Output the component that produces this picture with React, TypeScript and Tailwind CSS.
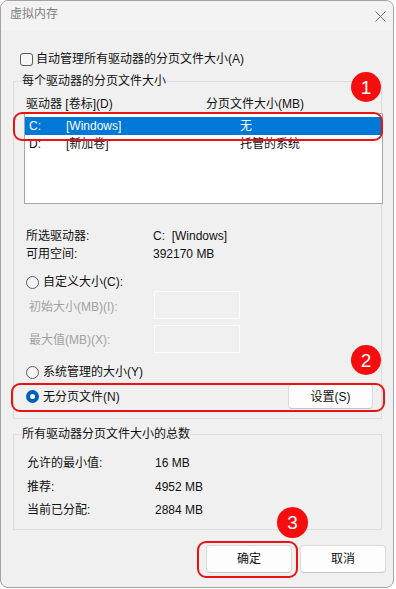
import type { ReactNode } from "react"

function Radio({ checked = false }: { checked?: boolean }) {
  if (checked) {
    return (
      <span className="w-[13px] h-[13px] rounded-full bg-[#005fb8] flex items-center justify-center shrink-0">
        <span className="w-[5px] h-[5px] rounded-full bg-white" />
      </span>
    )
  }
  return <span className="w-[13px] h-[13px] rounded-full border border-[#5b5b5b] bg-[#f6f6f6] shrink-0" />
}

function Button({ children, className }: { children: ReactNode; className: string }) {
  return (
    <div
      className={`flex items-center justify-center bg-[#fdfdfd] border border-[#dadada] border-b-[#c6c6c6] rounded-[4px] ${className}`}
    >
      {children}
    </div>
  )
}

export default function App() {
  return (
    <div className="w-[396px] h-[589px] bg-white font-['Liberation_Sans','Noto_Sans_CJK_SC',sans-serif] text-[12px] leading-[16px] text-[#111]">
      <div className="relative w-[394px] h-[588px] border border-[#a3a3a3] rounded-[8px] bg-[#f0f0f0] overflow-hidden flex flex-col">
        {/* title bar */}
        <div className="h-[30px] shrink-0 bg-[#f3f3f3] flex items-start justify-between pt-[5px] pl-[9px] pr-[7px]">
          <span className="text-[#808080]">虚拟内存</span>
          <svg className="mt-[5px]" width="11" height="11" viewBox="0 0 11 11">
            <path d="M0.5 0.5 L10.5 10.5 M10.5 0.5 L0.5 10.5" stroke="#6e6e6e" strokeWidth="1" fill="none" />
          </svg>
        </div>

        <div className="flex flex-col pl-[12px] pr-[11px]">
          <div className="mt-[20px] ml-[7px] flex items-center gap-[3px]">
            <span className="w-[13px] h-[13px] rounded-[3px] border border-[#5b5b5b] bg-[#f7f7f7]" />
            <span>自动管理所有驱动器的分页文件大小(A)</span>
          </div>

          {/* per-drive group */}
          <fieldset className="mt-[6px] border border-[#dcdcdc] pl-[8px] pr-0 pb-[9px] min-w-0">
            <legend>每个驱动器的分页文件大小</legend>
            <div className="mt-[7px] ml-[4px] flex">
              <span className="w-[180px]">驱动器 [卷标](D)</span>
              <span>分页文件大小(MB)</span>
            </div>
            <div className="mt-[1px] ml-[2px] -mr-[2px] h-[91px] border border-[#a6a6a6] bg-white pt-[3px]">
              <div className="h-[18px] flex items-center pl-[4px] bg-[#0078d7] text-white">
                <span className="w-[37px]">C:</span>
                <span className="w-[174px]">[Windows]</span>
                <span>无</span>
              </div>
              <div className="h-[18px] flex items-center pl-[4px]">
                <span className="w-[37px]">D:</span>
                <span className="w-[174px]">[新加卷]</span>
                <span>托管的系统</span>
              </div>
            </div>

            <div className="mt-[24px] ml-[4px] flex flex-col gap-[2px]">
              <div className="flex">
                <span className="w-[127px]">所选驱动器:</span>
                <span className="whitespace-pre">C:  [Windows]</span>
              </div>
              <div className="flex">
                <span className="w-[127px]">可用空间:</span>
                <span>392170 MB</span>
              </div>
            </div>

            <div className="mt-[12px] ml-[4px] flex items-center gap-[4px]">
              <Radio />
              <span>自定义大小(C):</span>
            </div>
            <div className="mt-[1px] ml-[7px] flex items-start text-[#a2a2a2]">
              <span className="w-[125px] mt-[8px]">初始大小(MB)(I):</span>
              <div className="w-[86px] h-[28px] border border-[#fcfcfc]" />
            </div>
            <div className="mt-[6px] ml-[7px] flex items-start text-[#a2a2a2]">
              <span className="w-[125px] mt-[7px]">最大值(MB)(X):</span>
              <div className="w-[86px] h-[28px] border border-[#fcfcfc]" />
            </div>

            <div className="mt-[11px] ml-[4px] flex items-center gap-[4px]">
              <Radio />
              <span>系统管理的大小(Y)</span>
            </div>
            <div className="mt-[4px] ml-[4px] mr-[8px] flex items-center justify-between">
              <div className="flex items-center gap-[4px]">
                <Radio checked />
                <span>无分页文件(N)</span>
              </div>
              <Button className="w-[85px] h-[25px]">设置(S)</Button>
            </div>
          </fieldset>

          {/* totals group */}
          <fieldset className="mt-[7px] border border-[#dcdcdc] pl-[8px] pr-0 pb-[11px] min-w-0">
            <legend>所有驱动器分页文件大小的总数</legend>
            <div className="mt-[13px] ml-[5px] flex">
              <span className="w-[128px]">允许的最小值:</span>
              <span>16 MB</span>
            </div>
            <div className="mt-[8px] ml-[5px] flex">
              <span className="w-[128px]">推荐:</span>
              <span>4952 MB</span>
            </div>
            <div className="mt-[7px] ml-[5px] flex">
              <span className="w-[128px]">当前已分配:</span>
              <span>2884 MB</span>
            </div>
          </fieldset>

          <div className="mt-[15px] -mr-[4px] flex justify-end gap-[8px]">
            <Button className="w-[86px] h-[28px]">确定</Button>
            <Button className="w-[86px] h-[28px]">取消</Button>
          </div>
        </div>

        {/* annotations */}
        <div className="absolute left-[12px] top-[111px] w-[370px] h-[29px] border-2 border-[#ec1212] rounded-[9px]" />
        <div className="absolute left-[10px] top-[382px] w-[374px] h-[29px] border-2 border-[#ec1212] rounded-[9px]" />
        <div className="absolute left-[196px] top-[540px] w-[101px] h-[37px] border-2 border-[#ec1212] rounded-[9px]" />
        <div className="absolute left-[350px] top-[71px] w-[30px] h-[30px] rounded-full bg-[#f60d0d] text-white text-[19px] leading-none flex items-center justify-center">1</div>
        <div className="absolute left-[350px] top-[344px] w-[30px] h-[30px] rounded-full bg-[#f60d0d] text-white text-[19px] leading-none flex items-center justify-center">2</div>
        <div className="absolute left-[276px] top-[506px] w-[31px] h-[31px] rounded-full bg-[#f60d0d] text-white text-[19px] leading-none flex items-center justify-center">3</div>
      </div>
    </div>
  )
}
